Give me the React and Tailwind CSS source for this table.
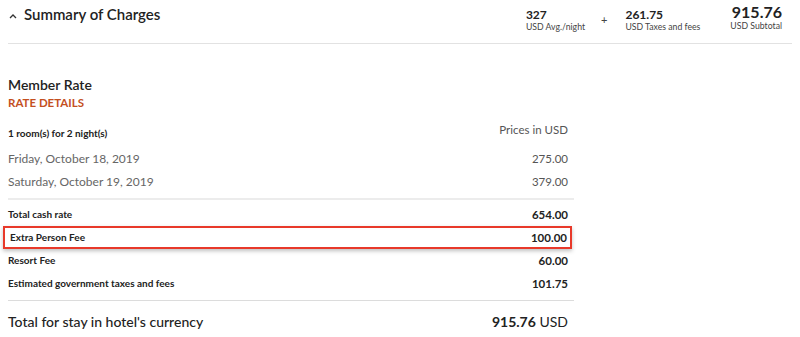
import React from "react";

function Stat({ value, label, big }) {
  return (
    <div className="flex flex-col items-start">
      <span className={big ? "text-[16px] font-bold leading-[17px] text-[#222] self-end" : "text-[12px] font-bold leading-[12px] text-[#222] mt-[6px]"}>
        {value}
      </span>
      <span className={big ? "text-[8.7px] leading-[11px] text-[#444] self-end" : "text-[8.7px] leading-[11px] text-[#444]"}>{label}</span>
    </div>
  );
}

function FeeRow({ label, amount, boxed }) {
  return (
    <div
      className={
        boxed
          ? "flex items-center justify-between h-[23px] -ml-[5px] pl-[5px] mr-[2px] border-2 border-[#e8392a] shadow-[0_2px_4px_rgba(0,0,0,0.25)]"
          : "flex items-center justify-between h-[23px]"
      }
    >
      <span className="text-[10px] font-bold text-[#222]">{label}</span>
      <span className={boxed ? "text-[11.5px] font-bold text-[#222] pr-[3px]" : "text-[11.5px] font-bold text-[#222] pr-[6px]"}>{amount}</span>
    </div>
  );
}

export default function App() {
  return (
    <div className="w-[800px] h-[337px] bg-white overflow-hidden" style={{ fontFamily: "Lato, 'Liberation Sans', Arial, sans-serif" }}>
      <div className="mx-2 h-[44px] border-b border-[#e2e2e2] flex items-start">
        <div className="flex items-center pt-[3px]">
          <svg width="8" height="6" viewBox="0 0 8 6" className="ml-[1px] mt-[3px]">
            <path d="M1 5 L4 2 L7 5" fill="none" stroke="#333" strokeWidth="1.3" />
          </svg>
          <span className="ml-[7px] text-[15px] font-semibold text-[#222]">Summary of Charges</span>
        </div>
        <div className="ml-auto flex items-start pt-[3px] pr-[10px]">
          <Stat value="327" label="USD Avg./night" />
          <span className="ml-[16px] mt-[9px] text-[11px] text-[#444]">+</span>
          <div className="ml-[18px]">
            <Stat value="261.75" label="USD Taxes and fees" />
          </div>
          <div className="ml-[30px]">
            <Stat value="915.76" label="USD Subtotal" big />
          </div>
        </div>
      </div>

      <div className="ml-2 w-[566px] pt-[32px]">
        <div className="text-[14px] font-semibold text-[#222] leading-[18px]">Member Rate</div>
        <div className="text-[11.5px] font-bold text-[#c4501f] leading-[16px] mt-[1px]">RATE DETAILS</div>

        <div className="flex items-end justify-between mt-[10px] h-[20px]">
          <span className="text-[10px] font-bold text-[#222]">1 room(s) for 2 night(s)</span>
          <span className="text-[11.5px] text-[#555] pr-[6px] pb-[3px]">Prices in USD</span>
        </div>

        <div className="mt-[6px]">
          <div className="flex items-center justify-between h-[23px]">
            <span className="text-[12px] text-[#666]">Friday, October 18, 2019</span>
            <span className="text-[11.5px] text-[#555] pr-[6px]">275.00</span>
          </div>
          <div className="flex items-center justify-between h-[23px]">
            <span className="text-[12px] text-[#666]">Saturday, October 19, 2019</span>
            <span className="text-[11.5px] text-[#555] pr-[6px]">379.00</span>
          </div>
        </div>

        <div className="mt-[5px] border-t-2 border-[#ececec]" />

        <div className="mt-[3px]">
          <FeeRow label="Total cash rate" amount="654.00" />
          <FeeRow label="Extra Person Fee" amount="100.00" boxed />
          <FeeRow label="Resort Fee" amount="60.00" />
          <FeeRow label="Estimated government taxes and fees" amount="101.75" />
        </div>

        <div className="mt-[5px] border-t border-[#dcdcdc]" />

        <div className="flex items-center justify-between h-[40px]">
          <span className="text-[14px] font-medium text-[#222]">Total for stay in hotel's currency</span>
          <span className="text-[14px] text-[#222] pr-[6px]">
            <span className="font-bold">915.76</span> USD
          </span>
        </div>
      </div>
    </div>
  );
}
